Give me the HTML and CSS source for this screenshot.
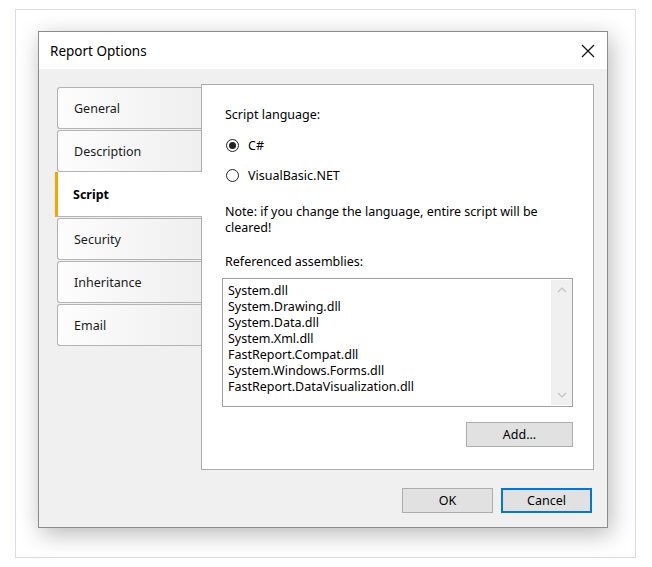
FILE: index.html
```html
<!DOCTYPE html>
<html>
<head>
<meta charset="utf-8">
<link rel="stylesheet" href="styles.css">
</head>
<body>
<div class="frame">
  <div class="dialog">
    <div class="titlebar">
      <span class="title">Report Options</span>
      <svg class="close" width="14" height="14" viewBox="0 0 14 14"><path d="M1 1L13 13M13 1L1 13" stroke="#111" stroke-width="1.2" fill="none"/></svg>
    </div>
    <div class="body">
      <div class="main">
        <div class="tabs">
          <div class="tab">General</div>
          <div class="tab">Description</div>
          <div class="tab active">Script</div>
          <div class="tab">Security</div>
          <div class="tab">Inheritance</div>
          <div class="tab">Email</div>
        </div>
        <div class="panel">
          <div class="label">Script language:</div>
          <div class="radios">
            <div class="radio checked"><span class="dot"></span><span>C#</span></div>
            <div class="radio"><span class="dot"></span><span>VisualBasic.NET</span></div>
          </div>
          <div class="note">Note: if you change the language, entire script will be<br>cleared!</div>
          <div class="label ref">Referenced assemblies:</div>
          <div class="listbox">
            <div class="items">
              <div>System.dll</div>
              <div>System.Drawing.dll</div>
              <div>System.Data.dll</div>
              <div>System.Xml.dll</div>
              <div>FastReport.Compat.dll</div>
              <div>System.Windows.Forms.dll</div>
              <div>FastReport.DataVisualization.dll</div>
            </div>
            <div class="scrollbar">
              <svg width="10" height="6" viewBox="0 0 10 6"><path d="M1 5L5 1L9 5" stroke="#c2c2c2" stroke-width="1.2" fill="none"/></svg>
              <svg width="10" height="6" viewBox="0 0 10 6"><path d="M1 1L5 5L9 1" stroke="#c2c2c2" stroke-width="1.2" fill="none"/></svg>
            </div>
          </div>
          <div class="addrow"><button class="btn add">Add...</button></div>
        </div>
      </div>
      <div class="footer">
        <button class="btn">OK</button>
        <button class="btn default">Cancel</button>
      </div>
    </div>
  </div>
</div>
</body>
</html>
```
FILE: styles.css
```css
* { box-sizing: border-box; }
html, body { margin: 0; padding: 0; background: #fff; }
body {
  font-family: "Noto Sans", "Open Sans", sans-serif;
  font-size: 12.5px;
  color: #000;
  width: 652px;
  height: 567px;
  overflow: hidden;
}
.frame {
  margin: 9px 0 0 15px;
  width: 621px;
  height: 549px;
  border: 1px solid #d9dce6;
  background: #fff;
  padding: 21px 0 0 22px;
}
.dialog {
  width: 570px;
  height: 497px;
  border: 1px solid #8c8c8c;
  background: #f0f0f0;
  box-shadow: 3px 6px 22px rgba(0,0,0,0.28);
  display: flex;
  flex-direction: column;
}
.titlebar {
  height: 37px;
  background: #fff;
  display: flex;
  align-items: center;
  justify-content: space-between;
  padding: 0 12px 0 11px;
}
.title { font-size: 13.5px; color: #000; }
.close { display: block; }
.body {
  flex: 1;
  padding: 15px 13px 0 16px;
  display: flex;
  flex-direction: column;
}
.main { display: flex; height: 386px; }
.tabs {
  width: 146px;
  padding-top: 3px;
  padding-left: 2px;
  display: flex;
  flex-direction: column;
  gap: 1px;
}
.tab {
  height: 42px;
  border: 1px solid #b4b4b4;
  border-right: none;
  border-radius: 3px 0 0 3px;
  background: linear-gradient(to right, #fdfdfd, #efefef);
  padding-left: 16px;
  display: flex;
  align-items: center;
  color: #1a1a1a;
}
.tab.active {
  height: 45px;
  margin-top: -1px;
  margin-left: -2px;
  margin-right: -1px;
  position: relative;
  z-index: 1;
  background: #fff;
  border-left: 3px solid #f6a400;
  border-top: none;
  border-radius: 0;
  font-weight: bold;
  color: #000;
  padding-left: 15px;
}
.panel {
  flex: 1;
  background: #fff;
  border: 1px solid #ababab;
  padding: 22px 20px 0 20px;
}
.label { padding-left: 3px; line-height: 16px; }
.radios { margin-top: 14px; display: flex; flex-direction: column; gap: 14px; }
.radio { display: flex; align-items: center; gap: 9px; padding-left: 4px; height: 16px; }
.dot {
  width: 13px; height: 13px;
  border: 1px solid #222;
  border-radius: 50%;
  display: flex; align-items: center; justify-content: center;
}
.radio.checked .dot::after {
  content: "";
  width: 7px; height: 7px; border-radius: 50%; background: #222;
}
.note { margin-top: 21px; padding-left: 3px; line-height: 16px; }
.ref { margin-top: 18px; }
.listbox {
  margin-top: 8px;
  height: 129px;
  border: 1px solid #a0a0a0;
  display: flex;
}
.items { flex: 1; padding: 4px 0 0 5px; line-height: 16px; }
.scrollbar {
  width: 21px;
  background: #f0f0f0;
  margin: 1px 0;
  display: flex;
  flex-direction: column;
  justify-content: space-between;
  align-items: center;
  padding: 7px 0 7px;
}
.scrollbar svg { display: block; }
.addrow { display: flex; justify-content: flex-end; margin-top: 15px; }
.btn {
  font-family: inherit;
  font-size: 12.5px;
  color: #000;
  width: 91px;
  height: 25px;
  background: #e1e1e1;
  border: 1px solid #adadad;
  padding: 0;
}
.btn.add { width: 107px; }
.btn.default { border: 2px solid #0078d7; }
.footer {
  display: flex;
  justify-content: flex-end;
  gap: 8px;
  padding-top: 18px;
  padding-right: 2px;
}
```
